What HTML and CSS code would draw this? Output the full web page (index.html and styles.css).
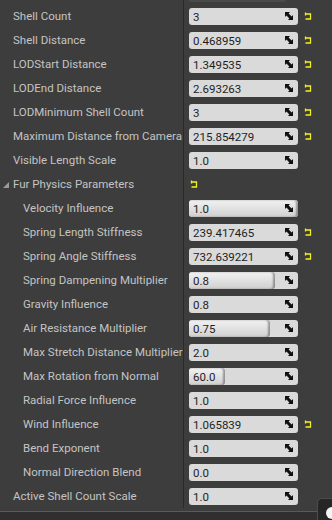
FILE: index.html
```html
<!DOCTYPE html>
<html lang="en">
<head>
  <meta charset="UTF-8">
  <title>Fur Details</title>
  <link rel="stylesheet" href="styles.css">
</head>
<body>
  <div class="panel">
    <!-- tail of the row scrolled away above -->
    <div class="top-strip"><div class="name"></div><div class="value"><div class="stub"></div></div></div>

    <div class="rows">
      <div class="row"><div class="name">Shell Count</div><div class="value"><div class="num"><span>3</span><svg class="spin" viewBox="0 0 8 8"><path d="M0 0H5L3.6 1.4L6.6 4.4L8 3V8H3L4.4 6.6L1.4 3.6L0 5Z"/></svg></div><svg class="reset" viewBox="0 0 8 9"><path d="M1.5 0.5V3.5M1 2H6.5V7H1.5"/></svg></div></div>
      <div class="row"><div class="name">Shell Distance</div><div class="value"><div class="num"><span>0.468959</span><svg class="spin" viewBox="0 0 8 8"><path d="M0 0H5L3.6 1.4L6.6 4.4L8 3V8H3L4.4 6.6L1.4 3.6L0 5Z"/></svg></div><svg class="reset" viewBox="0 0 8 9"><path d="M1.5 0.5V3.5M1 2H6.5V7H1.5"/></svg></div></div>
      <div class="row"><div class="name">LODStart Distance</div><div class="value"><div class="num"><span>1.349535</span><svg class="spin" viewBox="0 0 8 8"><path d="M0 0H5L3.6 1.4L6.6 4.4L8 3V8H3L4.4 6.6L1.4 3.6L0 5Z"/></svg></div><svg class="reset" viewBox="0 0 8 9"><path d="M1.5 0.5V3.5M1 2H6.5V7H1.5"/></svg></div></div>
      <div class="row"><div class="name">LODEnd Distance</div><div class="value"><div class="num"><span>2.693263</span><svg class="spin" viewBox="0 0 8 8"><path d="M0 0H5L3.6 1.4L6.6 4.4L8 3V8H3L4.4 6.6L1.4 3.6L0 5Z"/></svg></div><svg class="reset" viewBox="0 0 8 9"><path d="M1.5 0.5V3.5M1 2H6.5V7H1.5"/></svg></div></div>
      <div class="row"><div class="name">LODMinimum Shell Count</div><div class="value"><div class="num"><span>3</span><svg class="spin" viewBox="0 0 8 8"><path d="M0 0H5L3.6 1.4L6.6 4.4L8 3V8H3L4.4 6.6L1.4 3.6L0 5Z"/></svg></div><svg class="reset" viewBox="0 0 8 9"><path d="M1.5 0.5V3.5M1 2H6.5V7H1.5"/></svg></div></div>
      <div class="row"><div class="name">Maximum Distance from Camera</div><div class="value"><div class="num"><span>215.854279</span><svg class="spin" viewBox="0 0 8 8"><path d="M0 0H5L3.6 1.4L6.6 4.4L8 3V8H3L4.4 6.6L1.4 3.6L0 5Z"/></svg></div><svg class="reset" viewBox="0 0 8 9"><path d="M1.5 0.5V3.5M1 2H6.5V7H1.5"/></svg></div></div>
      <div class="row"><div class="name">Visible Length Scale</div><div class="value"><div class="num"><span>1.0</span><svg class="spin" viewBox="0 0 8 8"><path d="M0 0H5L3.6 1.4L6.6 4.4L8 3V8H3L4.4 6.6L1.4 3.6L0 5Z"/></svg></div></div></div>

      <!-- Category -->
      <div class="row category"><div class="name"><span class="arrow"></span>Fur Physics Parameters</div><div class="value"><svg class="reset cat-reset" viewBox="0 0 8 9"><path d="M1.5 0.5V3.5M1 2H6.5V7H1.5"/></svg></div></div>

      <div class="row sub"><div class="name">Velocity Influence</div><div class="value"><div class="num"><div class="fill" style="width: 100%"></div><span>1.0</span><svg class="spin" viewBox="0 0 8 8"><path d="M0 0H5L3.6 1.4L6.6 4.4L8 3V8H3L4.4 6.6L1.4 3.6L0 5Z"/></svg></div></div></div>
      <div class="row sub"><div class="name">Spring Length Stiffness</div><div class="value"><div class="num"><span>239.417465</span><svg class="spin" viewBox="0 0 8 8"><path d="M0 0H5L3.6 1.4L6.6 4.4L8 3V8H3L4.4 6.6L1.4 3.6L0 5Z"/></svg></div><svg class="reset" viewBox="0 0 8 9"><path d="M1.5 0.5V3.5M1 2H6.5V7H1.5"/></svg></div></div>
      <div class="row sub"><div class="name">Spring Angle Stiffness</div><div class="value"><div class="num"><span>732.639221</span><svg class="spin" viewBox="0 0 8 8"><path d="M0 0H5L3.6 1.4L6.6 4.4L8 3V8H3L4.4 6.6L1.4 3.6L0 5Z"/></svg></div><svg class="reset" viewBox="0 0 8 9"><path d="M1.5 0.5V3.5M1 2H6.5V7H1.5"/></svg></div></div>
      <div class="row sub"><div class="name">Spring Dampening Multiplier</div><div class="value"><div class="num"><div class="fill" style="width: 79%"></div><span>0.8</span><svg class="spin" viewBox="0 0 8 8"><path d="M0 0H5L3.6 1.4L6.6 4.4L8 3V8H3L4.4 6.6L1.4 3.6L0 5Z"/></svg></div></div></div>
      <div class="row sub"><div class="name">Gravity Influence</div><div class="value"><div class="num"><span>0.8</span><svg class="spin" viewBox="0 0 8 8"><path d="M0 0H5L3.6 1.4L6.6 4.4L8 3V8H3L4.4 6.6L1.4 3.6L0 5Z"/></svg></div></div></div>
      <div class="row sub"><div class="name">Air Resistance Multiplier</div><div class="value"><div class="num"><div class="fill" style="width: 74%"></div><span>0.75</span><svg class="spin" viewBox="0 0 8 8"><path d="M0 0H5L3.6 1.4L6.6 4.4L8 3V8H3L4.4 6.6L1.4 3.6L0 5Z"/></svg></div></div></div>
      <div class="row sub"><div class="name">Max Stretch Distance Multiplier</div><div class="value"><div class="num"><span>2.0</span><svg class="spin" viewBox="0 0 8 8"><path d="M0 0H5L3.6 1.4L6.6 4.4L8 3V8H3L4.4 6.6L1.4 3.6L0 5Z"/></svg></div></div></div>
      <div class="row sub"><div class="name">Max Rotation from Normal</div><div class="value"><div class="num"><div class="fill" style="width: 33%"></div><span>60.0</span><svg class="spin" viewBox="0 0 8 8"><path d="M0 0H5L3.6 1.4L6.6 4.4L8 3V8H3L4.4 6.6L1.4 3.6L0 5Z"/></svg></div></div></div>
      <div class="row sub"><div class="name">Radial Force Influence</div><div class="value"><div class="num"><span>1.0</span><svg class="spin" viewBox="0 0 8 8"><path d="M0 0H5L3.6 1.4L6.6 4.4L8 3V8H3L4.4 6.6L1.4 3.6L0 5Z"/></svg></div></div></div>
      <div class="row sub"><div class="name">Wind Influence</div><div class="value"><div class="num"><span>1.065839</span><svg class="spin" viewBox="0 0 8 8"><path d="M0 0H5L3.6 1.4L6.6 4.4L8 3V8H3L4.4 6.6L1.4 3.6L0 5Z"/></svg></div><svg class="reset" viewBox="0 0 8 9"><path d="M1.5 0.5V3.5M1 2H6.5V7H1.5"/></svg></div></div>
      <div class="row sub"><div class="name">Bend Exponent</div><div class="value"><div class="num"><span>1.0</span><svg class="spin" viewBox="0 0 8 8"><path d="M0 0H5L3.6 1.4L6.6 4.4L8 3V8H3L4.4 6.6L1.4 3.6L0 5Z"/></svg></div></div></div>
      <div class="row sub"><div class="name">Normal Direction Blend</div><div class="value"><div class="num"><span>0.0</span><svg class="spin" viewBox="0 0 8 8"><path d="M0 0H5L3.6 1.4L6.6 4.4L8 3V8H3L4.4 6.6L1.4 3.6L0 5Z"/></svg></div></div></div>
      <div class="row"><div class="name">Active Shell Count Scale</div><div class="value"><div class="num"><span>1.0</span><svg class="spin" viewBox="0 0 8 8"><path d="M0 0H5L3.6 1.4L6.6 4.4L8 3V8H3L4.4 6.6L1.4 3.6L0 5Z"/></svg></div></div></div>
    </div>

    <div class="next-category"><span class="arrow"></span>Max Fur Rules</div>

    <!-- floating button in the corner -->
    <div class="corner-btn"><span class="blob"></span></div>
  </div>
</body>
</html>
```

FILE: styles.css
```css
* {
  margin: 0;
  padding: 0;
  box-sizing: border-box;
}

body {
  background: #3d3d3d;
  font-family: 'Roboto', 'Liberation Sans', sans-serif;
  font-size: 11.5px;
  overflow: hidden;
}

.panel {
  position: relative;
  width: 332px;
  height: 520px;
  overflow: hidden;
}

.top-strip {
  display: flex;
  height: 4px;
}

.top-strip .name {
  border-right: 1px solid #2a2a2a;
}

.stub {
  width: 97px;
  height: 2px;
  background: #4a4a4a;
  border-radius: 0 0 3px 3px;
}

.row {
  display: flex;
  height: 24px;
}

.name {
  width: 184px;
  flex-shrink: 0;
  border-right: 1px solid #2a2a2a;
  color: #c4c4c4;
  padding-left: 13px;
  display: flex;
  align-items: center;
  white-space: nowrap;
  overflow: hidden;
}

.row.sub .name {
  padding-left: 23px;
}

.category .name {
  padding-left: 3px;
}

.arrow {
  width: 0;
  height: 0;
  border-left: 6px solid transparent;
  border-bottom: 6px solid #9a9a9a;
  margin-right: 4px;
  margin-top: 2px;
}

.value {
  display: flex;
  align-items: center;
  padding-left: 5px;
}

.top-strip .value {
  align-items: flex-start;
}

.num {
  position: relative;
  width: 109px;
  height: 17px;
  background: #dadada;
  border-radius: 3px;
  display: flex;
  align-items: center;
  padding: 0 5px 0 4px;
  color: #1e1e1e;
  overflow: hidden;
}

.num span {
  position: relative;
  flex: 1;
  padding-top: 1px;
}

.fill {
  position: absolute;
  left: 0;
  top: 0;
  bottom: 0;
  background: linear-gradient(#f2f2f2, #d0d0d0);
  border-radius: 3px;
  box-shadow: inset -2px 0 2px rgba(0, 0, 0, 0.35);
}

.spin {
  position: relative;
  width: 8px;
  height: 8px;
  fill: #111;
}

.reset {
  width: 8px;
  height: 9px;
  margin-left: 6px;
  fill: none;
  stroke: #f2f21e;
  stroke-width: 1.3;
}

.cat-reset {
  margin-left: 1px;
}

.next-category {
  margin-top: 3px;
  border-top: 1px solid #5a5a5a;
  background: #2f2f2f;
  height: 24px;
  color: #e6e6e6;
  font-size: 12px;
  display: flex;
  align-items: center;
  padding-left: 3px;
  padding-top: 6px;
}

.corner-btn {
  position: absolute;
  left: 317px;
  top: 498px;
  width: 30px;
  height: 30px;
  border: 1px solid #4c4c4c;
  border-radius: 5px;
  background: #262626;
}

.blob {
  position: absolute;
  left: 8px;
  top: 8px;
  width: 12px;
  height: 12px;
  border-radius: 50%;
  background: #f4f4f4;
}
```
